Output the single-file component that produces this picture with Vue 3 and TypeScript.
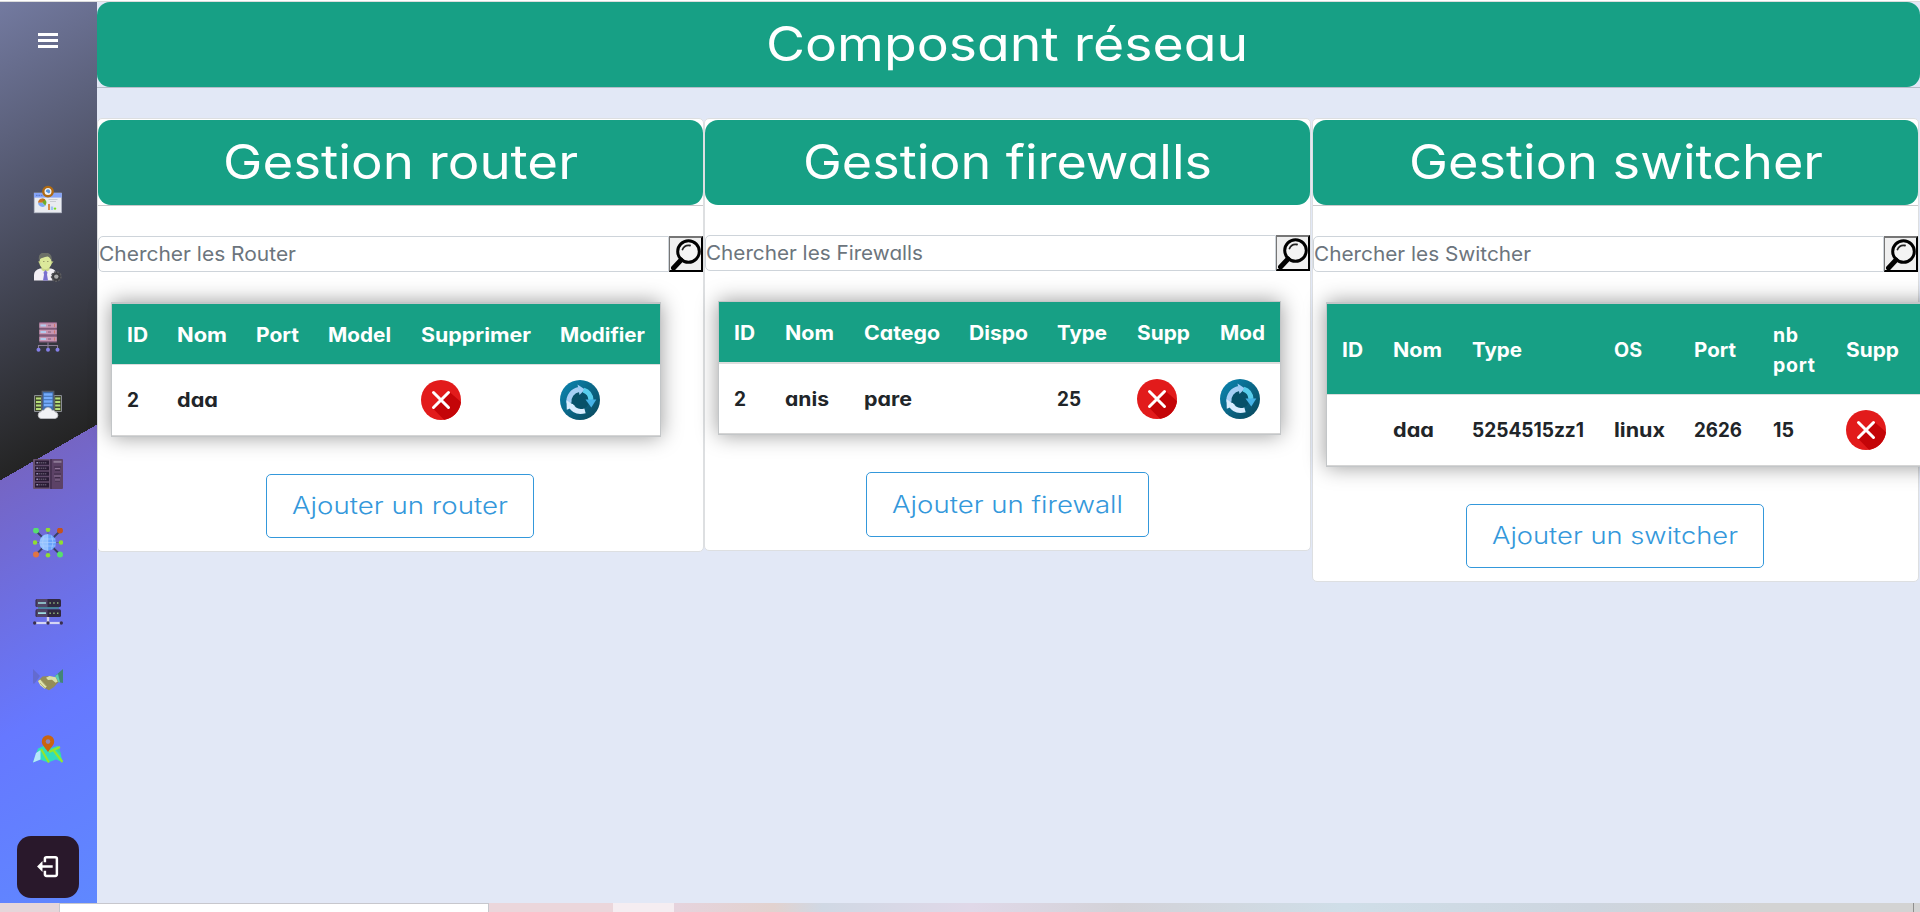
<script setup lang="ts">
import type { Directive } from 'vue'

interface Cell { text?: string; w?: number; icon?: 'delete' | 'update' }
interface Column { label: string; w: number; col: number }
interface Panel {
  key: string
  title: string
  titleW: number
  rule: boolean
  search: string
  searchW: number
  columns: Column[]
  row: Cell[]
  action: string
  actionW: number
}

const panels: Panel[] = [
  {
    key: 'router', title: 'Gestion router', titleW: 355, rule: true,
    search: 'Chercher les Router', searchW: 197,
    columns: [
      { label: 'ID', w: 21, col: 50 }, { label: 'Nom', w: 50, col: 79 }, { label: 'Port', w: 43, col: 72 },
      { label: 'Model', w: 63, col: 93 }, { label: 'Supprimer', w: 110, col: 139 }, { label: 'Modifier', w: 85, col: 115 },
    ],
    row: [{ text: '2', w: 12 }, { text: 'daa', w: 41 }, {}, {}, { icon: 'delete' }, { icon: 'update' }],
    action: 'Ajouter un router', actionW: 216,
  },
  {
    key: 'firewall', title: 'Gestion firewalls', titleW: 409, rule: false,
    search: 'Chercher les Firewalls', searchW: 217,
    columns: [
      { label: 'ID', w: 21, col: 51 }, { label: 'Nom', w: 49, col: 79 }, { label: 'Catego', w: 76, col: 105 },
      { label: 'Dispo', w: 59, col: 88 }, { label: 'Type', w: 50, col: 80 }, { label: 'Supp', w: 53, col: 83 },
      { label: 'Mod', w: 45, col: 75 },
    ],
    row: [{ text: '2', w: 12 }, { text: 'anis', w: 44 }, { text: 'pare', w: 48 }, {}, { text: '25', w: 24 }, { icon: 'delete' }, { icon: 'update' }],
    action: 'Ajouter un firewall', actionW: 231,
  },
  {
    key: 'switcher', title: 'Gestion switcher', titleW: 414, rule: true,
    search: 'Chercher les Switcher', searchW: 217,
    columns: [
      { label: 'ID', w: 21, col: 51 }, { label: 'Nom', w: 49, col: 79 }, { label: 'Type', w: 50, col: 142 },
      { label: 'OS', w: 28, col: 80 }, { label: 'Port', w: 42, col: 79 }, { label: 'nb port', w: 0, col: 73 },
      { label: 'Supp', w: 53, col: 83 }, { label: '', w: 0, col: 75 },
    ],
    row: [{}, { text: 'daa', w: 41 }, { text: '5254515zz1', w: 112 }, { text: 'linux', w: 51 }, { text: '2626', w: 48 }, { text: '15', w: 21 }, { icon: 'delete' }, {}],
    action: 'Ajouter un switcher', actionW: 246,
  },
]

// Widens a label's letters so that it takes the given width in pixels.
const vFit: Directive<HTMLElement, number | undefined> = {
  mounted(el, { value }) {
    const natural = el.getBoundingClientRect().width
    if (!value || !natural) return
    el.style.width = `${value}px`
    el.style.transform = `scaleX(${value / natural})`
  },
}
</script>

<template>
  <div class="page">
    <div class="topline"></div>
    <div class="shell">
      <aside class="sidebar">
        <div class="burger"><i></i><i></i><i></i></div>
        <nav>
          <svg viewBox="0 0 30 30">
            <rect x="1.2" y="9" width="27.4" height="19.8" fill="#e9ebf0" stroke="#aeb3c0" stroke-width=".7" />
            <rect x="1" y="9" width="27.8" height="4.6" fill="#86a4f6" />
            <path d="M3 11.3h7" stroke="#5474c8" stroke-dasharray="1.6 .8" />
            <circle cx="15" cy="7.6" r="4.7" fill="#f1f2f5" stroke="#b06a12" stroke-width="2.4" />
            <path d="M12.8 7.6a2.2 2.2 0 1 1 3 2z" fill="#5d96d8" />
            <path d="M9.3 18.7V14.4a4.3 4.3 0 0 0-4.3 4.3z" fill="#cf7320" />
            <path d="M9.3 14.4a4.3 4.3 0 0 1 3 7.3l-3-3z" fill="#6fae28" /><path d="M9.3 14.4a4.3 4.3 0 0 1 3 1.2l-3 3z" fill="#c26a18" />
            <path d="M5 18.7h4.3l3 3A4.3 4.3 0 0 1 5 18.7z" fill="#7eaaf4" />
            <path d="M15.5 15.5h9M17 17.5h6" stroke="#c9ccd2" />
            <path d="M16 20v6" stroke="#d98c4c" stroke-width="2" /><path d="M19 22.5v3.5" stroke="#9cc3f2" stroke-width="2.4" /><circle cx="22" cy="24.6" r="1.2" fill="#7ce01e" />
          </svg>
          <svg viewBox="0 0 30 30">
            <path d="M1 27.5v-5.500q0-5 6-6.500h11q5 1 5.500 6v6z" fill="#f3f0f5" />
            <path d="M8.500 12h8v5q-4 3-8 0z" fill="#cbd886" />
            <ellipse cx="12.500" cy="9" rx="6.200" ry="7.200" fill="#dce99b" />
            <path d="M5 8.500l2.500 0v3zM20.500 8.500l-2.500 0v3z" fill="#cad788" />
            <path d="M6 8Q4.500-.600 12-.600 20 0 18.600 8q-1.600-4-4-4.500Q9 4.500 7 6z" fill="#6c7068" />
            <path d="M10 8.500h1.500M14 8.500h1.500" stroke="#9fa06d" />
            <path d="M12.500 17l2 2.500-.5 2 1 6h-5l1-6-.5-2z" fill="#7a70cf" />
            <circle cx="23.300" cy="23.600" r="4.700" fill="#3c3c40" stroke="#5b5b5f" stroke-width="1.600" stroke-dasharray="2 1.200" />
            <circle cx="23.300" cy="23.600" r="2.200" fill="#a9a9a9" />
          </svg>
          <svg viewBox="0 0 30 30">
            <rect x="6.300" y="0" width="17.500" height="20.500" fill="#805a79" />
            <path d="M6.300 3.500h17.500M6.300 10h17.500M6.300 17h17.500" stroke="#c696b2" stroke-width="4.500" />
            <path d="M7.500 3.500h5.500M7.500 10h5.500M7.500 17h5.500" stroke="#b2cbed" stroke-width="2.200" />
            <path d="M15 3.500h3M15 10h3M15 17h3" stroke="#98718e" stroke-width="1.500" />
            <path d="M21.500 2v3M21.500 8.500v3M21.500 15.500v3" stroke="#d2796d" />
            <path d="M15 20.500v7M5.500 27v-3.500h19V27" fill="none" stroke="#8b7d94" stroke-width="1.100" />
            <g fill="#8580e8"><circle cx="5.500" cy="27.700" r="2" /><circle cx="15" cy="27.700" r="2" /><circle cx="24.500" cy="27.700" r="2" /></g>
          </svg>
          <svg viewBox="0 0 30 30">
            <path d="M1.500 21.500V5.500H9V21.500zM21 21.500V5.500h7.500V21.500z" fill="#42482f" stroke="#8a8d94" />
            <path d="M3 8.500h5M3 12h5M3 15.500h5M3 19h5M22.200 8.500h5M22.200 12h5M22.200 15.500h5M22.200 19h5" stroke="#b5dd78" stroke-width="2.200" />
            <rect x="9.200" y="1.300" width="11.600" height="20" fill="#3f6dae" stroke="#545b6c" stroke-width="1.200" />
            <path d="M10.800 4.500h8.600M10.800 8h8.600M10.800 11.500h8.600M10.800 15h8.600" stroke="#75acfb" stroke-width="2.400" />
            <path d="M8 28.500a3.400 3.400 0 0 1 0-6.700q1-2.300 3-1.500 1-3 4-2.800 3 0 4 3 2-1 3.200 1.500a3.300 3.300 0 0 1 0 6.500z" fill="#f1f1f4" stroke="#bdbdc2" stroke-width=".8" />
          </svg>
          <svg viewBox="0 0 30 30">
            <rect x="0" y="0" width="17" height="30" rx="1" fill="#67516f" /><rect x="17" y="0" width="13" height="30" rx="1" fill="#5c4266" />
            <rect x="2" y="1.500" width="14" height="27" fill="#291b34" />
            <path d="M2 6.500h14M2 12h14M2 17.500h14M2 23h14" stroke="#614b6b" stroke-width="1.700" />
            <path d="M5.500 3.800h8M5.500 9.300h8M5.500 14.800h8M5.500 20.300h8M5.500 25.800h8" stroke="#5c5267" stroke-width="1.500" stroke-dasharray="1.500 .6" />
            <path d="M3.400 3.800h1.500M3.400 9.300h1.500M3.400 14.800h1.500M3.400 20.300h1.500M3.400 25.800h1.500" stroke="#a19ac7" stroke-width="1.500" />
            <path d="M18 0v30" stroke="#3c2a47" stroke-width="1.200" /><path d="M20.500 2.800h8" stroke="#8c7995" stroke-width="2" />
            <path d="M21 8h7M22 11.500h5M21 15h7M22 18.500h5M22 22h5" stroke="#3f2c49" stroke-width="1.200" />
            <path d="M22 9.500h5M21 17h7M22 21h5" stroke="#9a82a1" stroke-width=".8" />
          </svg>
          <svg viewBox="0 0 30 30">
            <path d="M3 3l24 23.500M27 3L3 26.500" stroke="#384064" stroke-width="1.800" /><path d="M15 2v26M2 14.500h26" stroke="#59639a" />
            <circle cx="14.800" cy="14.500" r="8.300" fill="#68a4fc" /><path d="M14.800 6.200a8.300 8.300 0 0 0 0 16.600z" fill="#93c2ff" />
            <path d="M7.500 11h15M6.800 14.500h16M7.500 18h15M14.800 6v17M11 7.500q-3 7 0 14M18.500 7.500q3 7 0 14" fill="none" stroke="#aed0ff" stroke-width=".6" />
            <g fill="#56de70"><circle cx="3" cy="2.600" r="3" /><circle cx="27" cy="26.500" r="3" /></g>
            <circle cx="27" cy="2.600" r="3" fill="#c4531e" /><circle cx="3" cy="26.500" r="3" fill="#e17443" />
            <g fill="#8fdd33"><circle cx="15" cy="1.800" r="2.300" /><circle cx="15" cy="27.200" r="2.300" /><circle cx="2" cy="14.500" r="2.300" /><circle cx="28" cy="14.500" r="2.300" /></g>
          </svg>
          <svg viewBox="0 0 30 30">
            <rect x="2.500" y="2" width="25.500" height="8" rx="1.500" fill="#30283f" /><rect x="2.500" y="12.200" width="25.500" height="7.800" rx="1.500" fill="#30283f" />
            <path d="M3.500 2h11v8h-11zM3.500 12.200h11V20h-11z" fill="#514566" />
            <path d="M5 10.900h21" stroke="#43858a" stroke-width="1.600" />
            <path d="M5 6h8M5 16.200h8" stroke="#9ddde0" stroke-width="1.700" />
            <path d="M16.500 6h10M16.500 16.200h10" stroke="#9cc584" stroke-width="1.500" stroke-dasharray="1.300 2.500" />
            <path d="M15 20v5" stroke="#d9d4ec" stroke-width="2.400" /><path d="M1 26h28" stroke="#d4d5f4" stroke-width="2.200" />
            <g fill="#3a304e"><circle cx="1.700" cy="26" r="1.700" /><circle cx="15" cy="26" r="1.700" /><circle cx="28.300" cy="26" r="1.700" /></g>
          </svg>
          <svg viewBox="0 0 30 30">
            <path d="M0 4l7 7-5.500 7.500H0z" fill="#636bd0" /><path d="M30 4l-8 7 3 6 5 1z" fill="#438576" /><path d="M25 9l-3 2 3 6 2 .4z" fill="#5bcdb4" />
            <path d="M5 16l4.500-4.500 7-.500 6.500 1.500 2.500 4.500-4.500 5-5 3.300-5.500-2.800z" fill="#938d58" />
            <path d="M13 12.800l3.500-1.800 6.200 1.200 2 4.300-2.200 1.200-3.500-3-4 .2z" fill="#d9dfaa" />
            <path d="M5 16l2.200-1.500 6.500 6.800-2 2.500-4.500-3.500z" fill="#dfe4aa" />
            <path d="M7 18l5 5M9 16.500l4 4.500" stroke="#a4a06d" stroke-width=".7" />
          </svg>
          <svg viewBox="0 0 30 30">
            <path d="M0 28.500l5-14 6-2.800 8 2 6-2 5 16.800-7-3-8 3-8-3z" fill="#31debb" />
            <path d="M0 28.500l3-9.500 4.500-3v9.500z" fill="#b8e6fb" /><path d="M21 14l4.500-1.500 3 9z" fill="#35d5a2" />
            <path d="M8 15l8 13.500M16 18l11-5M20 15.500l9.500 12.500" fill="none" stroke="#95e52c" stroke-width="2.200" />
            <path d="M15 18C11 12.500 8.800 10.500 8.800 7.500a6.200 6.200 0 0 1 12.400 0c0 3-2.200 5-6.200 10.500z" fill="#ca640f" /><circle cx="15" cy="7.600" r="2.300" fill="#8e86bd" />
          </svg>
        </nav>
        <div class="logout">
          <svg viewBox="0 0 24 24" fill="none" stroke="#fff" stroke-width="2.400">
            <path d="M9.500 8V4.500q0-1.500 1.500-1.500h8.500q1.500 0 1.500 1.500v15q0 1.500-1.500 1.500H11q-1.500 0-1.500-1.500V16" />
            <path d="M17 12H6" /><path d="M2 12l5.200-5.200v10.400z" fill="#fff" stroke="none" />
          </svg>
        </div>
      </aside>

      <main class="content">
        <h1 class="banner main"><span v-fit="482" class="fit">Composant réseau</span></h1>
        <hr class="rule" />
        <div class="panels">
          <section v-for="p in panels" :key="p.key" class="panel" :class="p.key">
            <h2 class="banner"><span v-fit="p.titleW" class="fit">{{ p.title }}</span></h2>
            <hr v-if="p.rule" class="rule" />
            <div class="search">
              <div class="field"><span v-fit="p.searchW" class="fit">{{ p.search }}</span></div>
              <button class="lens" type="button">
                <svg viewBox="0 0 30 32">
                  <circle cx="17.500" cy="13.500" r="10.800" fill="#f4f4f4" stroke="#000" stroke-width="3" />
                  <path d="M11.500 11.500q2-5 7.500-4" fill="none" stroke="#222" stroke-width="1.800" stroke-linecap="round" />
                  <path d="M10 22L2.500 30" stroke="#000" stroke-width="5" stroke-linecap="round" />
                </svg>
              </button>
            </div>
            <table class="grid">
              <colgroup><col v-for="c in p.columns" :key="c.label" :style="{ width: c.col + 'px' }" /></colgroup>
              <thead>
                <tr>
                  <th v-for="c in p.columns" :key="c.label">
                    <span v-if="c.w" v-fit="c.w" class="fit">{{ c.label }}</span>
                    <span v-else class="wrap">{{ c.label }}</span>
                  </th>
                </tr>
              </thead>
              <tbody>
                <tr>
                  <td v-for="(cell, i) in p.row" :key="i">
                    <span v-if="cell.text" v-fit="cell.w" class="fit">{{ cell.text }}</span>
                    <svg v-else-if="cell.icon === 'delete'" class="op" viewBox="0 0 40 40">
                      <circle cx="20" cy="20" r="20" fill="#e21b1b" />
                      <path d="M28.500 12L40 22A20 20 0 0 1 23 39.800L11.500 28z" fill="#c40508" />
                      <path d="M12.500 12.500l15 15M27.500 12.500l-15 15" stroke="#fff" stroke-width="3" stroke-linecap="round" />
                    </svg>
                    <svg v-else-if="cell.icon === 'update'" class="op" viewBox="0 0 40 40">
                      <defs><linearGradient id="disc" x1="0" y1="0" x2="1" y2="1"><stop offset=".2" stop-color="#0b7ba3" /><stop offset=".85" stop-color="#0a4f66" /></linearGradient></defs>
                      <circle cx="20" cy="20" r="20" fill="url(#disc)" />
                      <circle cx="20" cy="20" r="9.500" fill="#075169" />
                      <path d="M9 23A12 12 0 0 1 19 9.500" fill="none" stroke="#a6cff5" stroke-width="5" /><path d="M17.500 4.500l7.500 5-5.500 5.500z" fill="#9fcdf5" />
                      <path d="M23.500 10.200A11 11 0 0 1 31 20" fill="none" stroke="#58cdec" stroke-width="5" /><path d="M25.500 19.500h10.800l-5 8z" fill="#46b2e6" />
                      <path d="M25 30.800Q15 33.500 10.500 25" fill="none" stroke="#d9edff" stroke-width="5" /><path d="M6.500 20.200l9 6-8.700 3.600z" fill="#d9edff" />
                    </svg>
                  </td>
                </tr>
              </tbody>
            </table>
            <button class="add" type="button"><span v-fit="p.actionW" class="fit">{{ p.action }}</span></button>
          </section>
        </div>
      </main>
    </div>
    <footer class="strip"><div class="tab"></div><div class="pink"></div><div class="light"></div><div class="haze"></div><div class="edge"></div></footer>
  </div>
</template>

<style>
body { margin: 0; overflow: hidden; }
</style>

<style scoped>
* { box-sizing: border-box; }
.page {
  width: 1920px; height: 912px; overflow: hidden; display: flex; flex-direction: column;
  font-family: Inter, "Open Sans", sans-serif; font-feature-settings: "cv11" 1; color: #212529; background: #fff;
}
.fit { display: inline-block; transform-origin: 0 50%; white-space: nowrap; text-align: left; }
.topline { flex: none; height: 2px; border-bottom: 1px solid #dcdcdc; }
.shell { flex: none; height: 901px; display: flex; }
.sidebar {
  flex: none; width: 97px; padding-right: 1px; display: flex; flex-direction: column; align-items: center;
  background: linear-gradient(150deg, #737aa0 0%, #242424 50%, #7565c4 50%, #6678ff 77%, #5f88ff 100%);
}
.burger { width: 20px; margin-top: 31px; height: 15px; display: flex; flex-direction: column; justify-content: space-between; }
.burger i { height: 3px; background: #fff; }
nav { margin-top: 136px; display: flex; flex-direction: column; gap: 38.750px; }
nav svg { display: block; width: 30px; height: 30px; }
.logout {
  width: 62px; height: 62px; margin: auto 0 5px; padding: 0 1px 2px 0; border-radius: 14px; background: #29182b;
  display: flex; align-items: center; justify-content: center;
}
.logout svg { width: 25px; height: 25px; }
.content { flex: none; width: 1823px; background: #e2e8f6; }
.banner {
  height: 85px; margin: 0; border-radius: 13px; background: #17a085; color: #fff; text-align: center;
  font-size: 48px; font-weight: 400; line-height: 84px; white-space: nowrap;
}
.banner.main { padding-right: 3px; }
.rule { height: 1px; margin: 0; border: 0; background: #b5bdc9; }
.panels { margin-top: 30px; display: grid; grid-template-columns: repeat(3, 607px); align-items: start; }
.panel { min-width: 0; border: 1px solid #dddfe1; border-radius: 5px; background: #fff; padding-top: 1px; }
.panel.switcher { width: 607px; margin-left: 1px; }
.panel .rule { background: #c9c9cb; }
.search { height: 36px; margin-top: 30px; display: flex; }
.field {
  flex: 1; border: 1px solid #ced4da; border-radius: 5px 0 0 5px; color: #6c757d;
  font-size: 20px; line-height: 34px; white-space: nowrap;
}
.lens { width: 34px; padding: 0 0 0 1px; border: 2px outset #222; border-color: #767676 #222 #222 #767676; border-left-width: 1px; background: #efefef; }
.lens svg { display: block; width: 30px; height: 32px; }
.grid {
  width: 550px; margin: 30px 0 0 13px; table-layout: fixed; border-collapse: separate; border-spacing: 0;
  border: 1px solid #c3c6c8; border-top-width: 2px; background: #fff; box-shadow: 0 0 20px rgba(0, 0, 0, .4);
  font-size: 19.500px; font-weight: 700; line-height: 30px; text-align: left;
}
.firewall .grid { width: 563px; border-top-width: 1px; }
.switcher .grid { width: 664px; }
.grid th { padding: 16px 14px 14px 15px; background: #17a085; color: #fff; font-weight: 700; }
.grid th, .grid td { white-space: nowrap; }
.grid th .wrap { white-space: normal; letter-spacing: .7px; display: block; }
.grid td { height: 72px; padding: 0 14px 0 15px; border-top: 1px solid #dddddd; border-bottom: 1px solid #d5d5d5; }
.firewall .grid td { border-top-width: 2px; }
.grid .fit { display: block; width: max-content; }
.op { display: block; width: 40px; height: 40px; }
.add {
  display: block; height: 64px; margin: 37px 0 13px 168px; padding: 0 25px; border: 1px solid #3498db; border-radius: 5px;
  background: #fff; color: #3498db; font: 300 23.500px/62px Inter, "Open Sans", sans-serif; font-feature-settings: normal; white-space: nowrap;
}
.firewall .add { margin-left: 161px; height: 65px; }
.switcher .add { margin-left: 153px; }
.strip { flex: 1; display: flex; background: #e5d6da; }
.tab { width: 430px; margin-left: 59px; border: 1px solid #c7c7cd; border-bottom: 0; background: #fff; }
.pink { width: 124px; background: #ebd6db; }
.light { width: 61px; background: #f5edf1; }
.haze { width: 1239px; background: linear-gradient(90deg, #e6d3dd, #e2d2cf 8%, #d0d8e4 12%, #e0d8e8 24%, #d3d2d8 36%, #cfdee8 54%, #cdd5df 74%, #d3d3d3 88%); }
.edge { flex: 1; border-left: 1px solid #8f8f8f; background: #d3d3d3; }
</style>
